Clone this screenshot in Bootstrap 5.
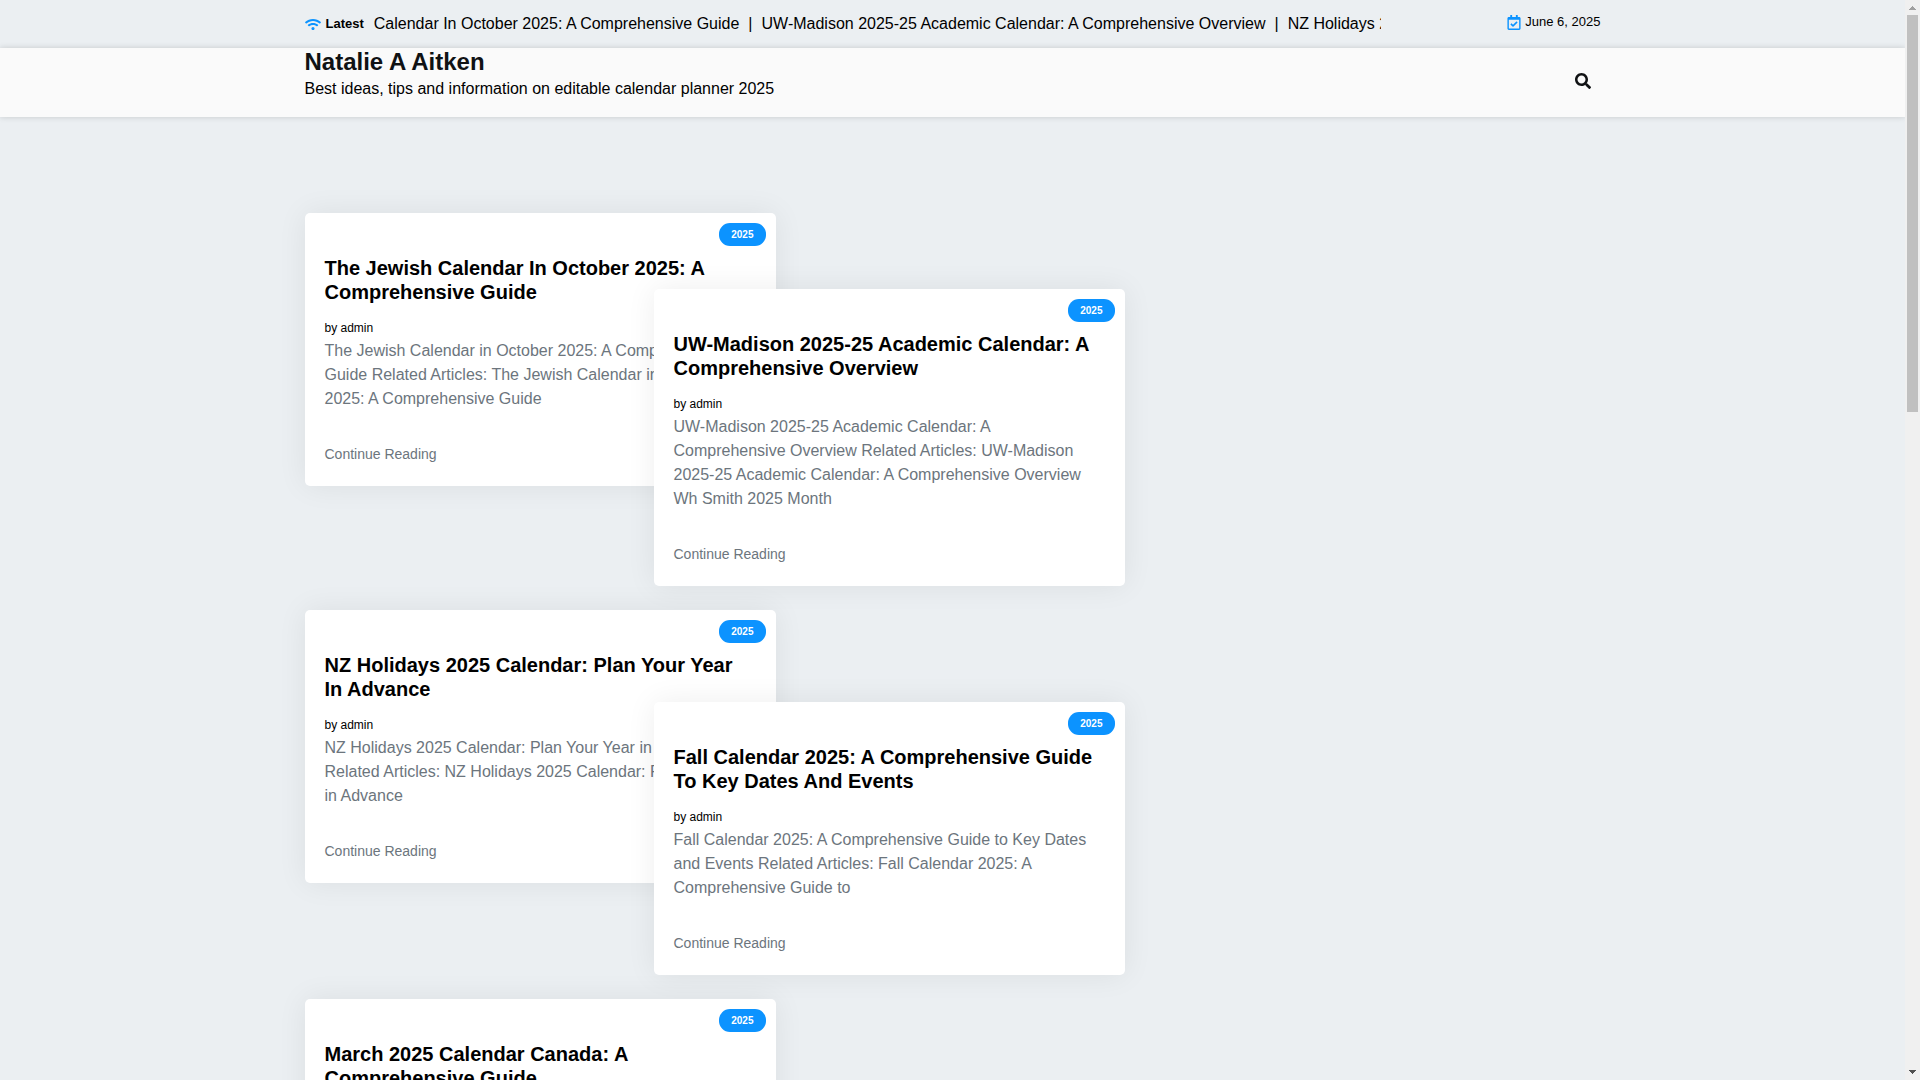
<!DOCTYPE html>
<html lang="en">
<head>
<meta charset="utf-8">
<meta name="viewport" content="width=device-width, initial-scale=1">
<title>Natalie A Aitken</title>
<link rel="stylesheet" href="https://cdn.jsdelivr.net/npm/bootstrap@5.3.0/dist/css/bootstrap.min.css">
<style>
  :root { --accent: #0c93ff; }
  body { background: #ebeff2; color: #000; font-family: "Liberation Sans", Arial, sans-serif; font-size: 16px; line-height: 24px; height: 100vh; overflow: hidden; padding-right: 15px; }
  svg { display: block; flex: none; fill: currentColor; }
  .accent { color: var(--accent); }
  .ticker-label { font-size: 13px; gap: 5px; margin-right: 10px; }
  .ticker { min-width: 0; overflow: hidden; white-space: nowrap; gap: 9px; }
  .ticker a { flex: none; }
  .today { font-size: 13px; line-height: 20px; gap: 4px; }
  .site-header { background: #fafafa; box-shadow: 0 0 6px rgba(0, 0, 0, .16); position: relative; }
  .site-title { font-size: 24px; line-height: 27px; margin: 0 0 2px; color: #101214; }
  .search-toggle { padding: 10px; color: #101214; }
  .posts { display: grid; grid-template-columns: 349fr 122fr 349fr 476fr; row-gap: 24px; align-items: start; margin-top: 96px; }
  .post-left { grid-column: 1 / 3; }
  .post-right { grid-column: 2 / 4; margin-top: 92px; }
  .posts .first-right { margin-top: 76px; }
  .post-left, .post-right { grid-row: var(--line); }
  .line-1 { --line: 1; } .line-2 { --line: 2; } .line-3 { --line: 3; }
  .post { border: 0; border-radius: 5px; padding: 43px 20px 20px; box-shadow: 0 0 30px rgba(0, 0, 0, .07); }
  .post-tag { position: absolute; top: 10px; right: 10px; background: var(--accent); color: #fff; border-radius: 11px; padding: 0 12px; font-size: 10px; font-weight: 700; line-height: 23px; }
  .post-title { font-size: 20px; line-height: 24px; font-weight: 700; margin: 0 0 14px; }
  .post-author { font-size: 12px; line-height: 21px; }
  .post-text { color: #6c757d; margin: 0 0 31px; }
  .post-more { font-size: 14px; line-height: 24px; color: #6c757d; }
  .scroll-track { position: fixed; top: 0; right: 0; bottom: 0; width: 15px; background: #f0f0f0; z-index: 10; padding: 6px 0; }
  .scroll-thumb { width: 11px; height: 397px; background: #c0c0c0; margin: 5px auto 0; }
  @media (max-width: 991px) {
    .posts { display: flex; flex-direction: column; align-items: stretch; margin-top: 24px; }
    .posts .post-right { margin-top: 0; }
  }
</style>
<script src="https://cdn.jsdelivr.net/npm/bootstrap@5.3.0/dist/js/bootstrap.bundle.min.js"></script>
</head>
<body>
<div class="container">
  <div class="row py-2">
    <div class="col-10 d-flex py-1">
      <div class="ticker-label d-flex align-items-center fw-bold">
        <svg class="accent" width="16" height="13" viewBox="0 0 640 512" aria-hidden="true"><path d="M634.91 154.88C457.74-8.99 182.19-8.93 5.09 154.88c-6.66 6.16-6.79 16.59-.35 22.98l34.24 33.97c6.14 6.1 16.02 6.23 22.4.38 145.92-133.68 371.3-133.71 517.25 0 6.38 5.85 16.26 5.71 22.4-.38l34.24-33.97c6.43-6.39 6.3-16.82-.36-22.98zM320 352c-35.35 0-64 28.65-64 64s28.65 64 64 64 64-28.65 64-64-28.65-64-64-64zm202.67-83.59c-115.26-101.93-290.21-101.82-405.34 0-6.9 6.1-7.12 16.69-.57 23.15l34.44 33.99c6 5.92 15.66 6.32 22.05.8 83.95-72.57 209.74-72.41 293.49 0 6.39 5.52 16.05 5.13 22.05-.8l34.44-33.99c6.56-6.46 6.33-17.06-.56-23.15z"/></svg>
        Latest
      </div>
      <div class="ticker d-flex flex-grow-1">
        <a class="text-black text-decoration-none" href="#">Calendar In October 2025: A Comprehensive Guide</a><span>|</span>
        <a class="text-black text-decoration-none" href="#">UW-Madison 2025-25 Academic Calendar: A Comprehensive Overview</a><span>|</span>
        <a class="text-black text-decoration-none" href="#">NZ Holidays 2025</a>
      </div>
    </div>
    <div class="col-2 py-1">
      <div class="today d-flex justify-content-end align-items-center">
        <svg class="accent" width="14" height="15" viewBox="0 0 448 512" aria-hidden="true"><path d="M400 64h-48V12c0-6.627-5.373-12-12-12h-40c-6.627 0-12 5.373-12 12v52H160V12c0-6.627-5.373-12-12-12h-40c-6.627 0-12 5.373-12 12v52H48C21.49 64 0 85.49 0 112v352c0 26.51 21.49 48 48 48h352c26.51 0 48-21.49 48-48V112c0-26.51-21.49-48-48-48zm-6 400H54a6 6 0 0 1-6-6V160h352v298a6 6 0 0 1-6 6zm-52.849-200.65L198.842 404.519c-4.705 4.667-12.303 4.637-16.971-.068l-75.091-75.699c-4.667-4.705-4.637-12.303.068-16.971l22.719-22.536c4.705-4.667 12.303-4.637 16.97.069l44.104 44.461 111.072-110.181c4.705-4.667 12.303-4.637 16.971.068l22.536 22.718c4.667 4.705 4.636 12.303-.069 16.97z"/></svg>
        <time datetime="2025-06-06">June 6, 2025</time>
      </div>
    </div>
  </div>
</div>

<header class="site-header">
  <div class="container d-flex justify-content-between align-items-center">
    <div>
      <h1 class="site-title fw-bold"><a class="text-reset text-decoration-none" href="#">Natalie A Aitken</a></h1>
      <p class="mb-3">Best ideas, tips and information on editable calendar planner 2025</p>
    </div>
    <button type="button" class="search-toggle btn border-0 mb-1" aria-label="Search">
      <svg width="16" height="16" viewBox="0 0 512 512" aria-hidden="true"><path d="M505 442.7L405.3 343c-4.5-4.5-10.6-7-17-7H372c27.6-35.3 44-79.7 44-128C416 93.1 322.9 0 208 0S0 93.1 0 208s93.1 208 208 208c48.3 0 92.7-16.4 128-44v16.3c0 6.4 2.5 12.5 7 17l99.7 99.7c9.4 9.4 24.6 9.4 33.9 0l28.3-28.3c9.4-9.4 9.4-24.6.1-34zM208 336c-70.7 0-128-57.2-128-128 0-70.7 57.2-128 128-128 70.7 0 128 57.2 128 128 0 70.7-57.2 128-128 128z"/></svg>
    </button>
  </div>
</header>

<main class="container">
  <div class="posts">
    <article class="post card post-left line-1">
      <a class="post-tag text-decoration-none" href="#">2025</a>
      <h2 class="post-title"><a class="text-black text-decoration-none" href="#">The Jewish Calendar In October 2025: A Comprehensive Guide</a></h2>
      <div class="post-author">by <a class="text-reset text-decoration-none" href="#">admin</a></div>
      <p class="post-text">The Jewish Calendar in October 2025: A Comprehensive Guide Related Articles: The Jewish Calendar in October 2025: A Comprehensive Guide</p>
      <a class="post-more text-decoration-none" href="#">Continue Reading</a>
    </article>
    <article class="post card post-right first-right line-1">
      <a class="post-tag text-decoration-none" href="#">2025</a>
      <h2 class="post-title"><a class="text-black text-decoration-none" href="#">UW-Madison 2025-25 Academic Calendar: A Comprehensive Overview</a></h2>
      <div class="post-author">by <a class="text-reset text-decoration-none" href="#">admin</a></div>
      <p class="post-text">UW-Madison 2025-25 Academic Calendar: A Comprehensive Overview Related Articles: UW-Madison 2025-25 Academic Calendar: A Comprehensive Overview Wh Smith 2025 Month</p>
      <a class="post-more text-decoration-none" href="#">Continue Reading</a>
    </article>
    <article class="post card post-left line-2">
      <a class="post-tag text-decoration-none" href="#">2025</a>
      <h2 class="post-title"><a class="text-black text-decoration-none" href="#">NZ Holidays 2025 Calendar: Plan Your Year In Advance</a></h2>
      <div class="post-author">by <a class="text-reset text-decoration-none" href="#">admin</a></div>
      <p class="post-text">NZ Holidays 2025 Calendar: Plan Your Year in Advance Related Articles: NZ Holidays 2025 Calendar: Plan Your Year in Advance</p>
      <a class="post-more text-decoration-none" href="#">Continue Reading</a>
    </article>
    <article class="post card post-right line-2">
      <a class="post-tag text-decoration-none" href="#">2025</a>
      <h2 class="post-title"><a class="text-black text-decoration-none" href="#">Fall Calendar 2025: A Comprehensive Guide To Key Dates And Events</a></h2>
      <div class="post-author">by <a class="text-reset text-decoration-none" href="#">admin</a></div>
      <p class="post-text">Fall Calendar 2025: A Comprehensive Guide to Key Dates and Events Related Articles: Fall Calendar 2025: A Comprehensive Guide to</p>
      <a class="post-more text-decoration-none" href="#">Continue Reading</a>
    </article>
    <article class="post card post-left line-3">
      <a class="post-tag text-decoration-none" href="#">2025</a>
      <h2 class="post-title"><a class="text-black text-decoration-none" href="#">March 2025 Calendar Canada: A Comprehensive Guide</a></h2>
    </article>
  </div>
</main>

<div class="scroll-track d-flex flex-column align-items-center" aria-hidden="true">
  <svg width="7" height="4" viewBox="0 0 7 4" shape-rendering="crispEdges"><path d="M3 0h1v1h1v1h1v1h1v1H0V3h1V2h1V1h1z" fill="#a0a0a0"/></svg>
  <div class="scroll-thumb mb-auto"></div>
  <svg width="7" height="4" viewBox="0 0 7 4" shape-rendering="crispEdges"><path d="M0 0h7v1H6v1H5v1H4v1H3V3H2V2H1V1H0z" fill="#505050"/></svg>
</div>
</body>
</html>
